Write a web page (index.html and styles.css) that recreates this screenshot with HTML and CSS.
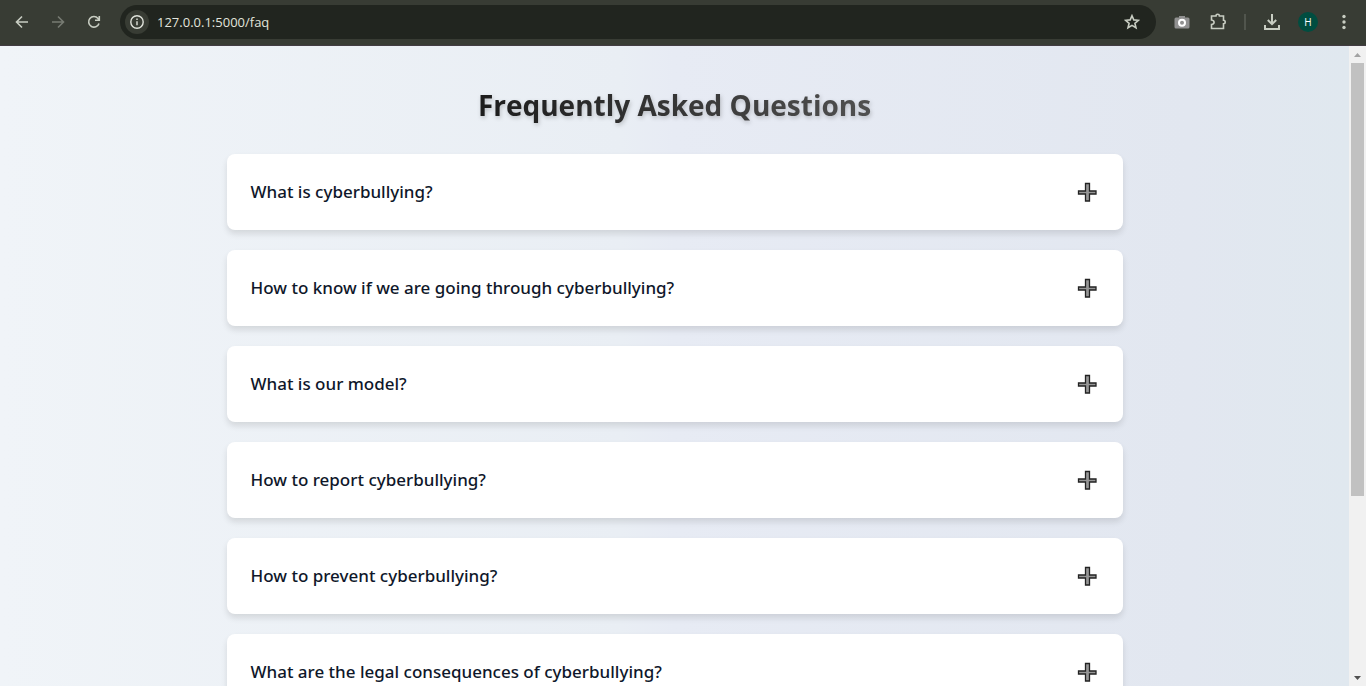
FILE: index.html
```html
<!DOCTYPE html>
<html lang="en">
<head>
<meta charset="utf-8">
<title>Frequently Asked Questions</title>
<link rel="stylesheet" href="styles.css">
</head>
<body>
<header class="toolbar">
  <nav class="nav" aria-label="History">
    <button class="icon-btn" aria-label="Back"><svg viewBox="0 0 16 16"><path d="M14 8H3M8 2.500 2.500 8 8 13.500"/></svg></button>
    <button class="icon-btn dim" aria-label="Forward"><svg viewBox="0 0 16 16"><path d="M2 8h11M8 2.500 13.500 8 8 13.500"/></svg></button>
    <button class="icon-btn" aria-label="Reload"><svg viewBox="0 0 16 16"><path d="M13 9.500A5.300 5.300 0 1 1 12 4.400L13.200 5.800M13.300 2v4.300H9"/></svg></button>
  </nav>
  <div class="omnibox">
    <button class="info" aria-label="Site information"><svg viewBox="0 0 16 16"><circle cx="8" cy="8" r="6.200"/><path d="M8 7.200v4M8 4.500v1.600"/></svg></button>
    <input class="url" aria-label="Address" value="127.0.0.1:5000/faq">
    <button class="icon-btn" aria-label="Bookmark"><svg viewBox="0 0 16 16"><path d="m8 1.700 1.800 4.200 4.600.4-3.500 3 1.100 4.500L8 11.400l-4 2.400 1.100-4.500-3.500-3 4.600-.4z"/></svg></button>
  </div>
  <div class="actions">
    <button class="icon-btn" aria-label="Screenshot"><svg viewBox="0 0 16 16"><path class="camera" d="M2 3.500h3V2h6v1.500h3q1.500 0 1.500 1.500v8q0 1.500-1.500 1.500H2Q.5 14.500.5 13V5Q.5 3.500 2 3.500z"/><circle class="lens" cx="8" cy="8.700" r="3"/></svg></button>
    <button class="icon-btn large" aria-label="Extensions"><svg viewBox="0 0 18 18"><path d="M3.500 3h4.500a1.700 1.700 0 0 1 3.400 0H15.500v4.300a1.700 1.700 0 0 1 0 3.400v4.800H3.500v-4q2.600-.4 2.600-2.250T3.500 7z"/></svg></button>
    <span class="divider"></span>
    <button class="icon-btn" aria-label="Downloads"><svg viewBox="0 0 16 16"><path class="bold" d="M8 0v10M3.800 6 8 10.200 12.200 6M1 11v4h14v-4"/></svg></button>
    <button class="avatar" aria-label="Profile">H</button>
    <button class="icon-btn" aria-label="Menu"><svg viewBox="0 0 16 16"><g class="dots"><circle cx="8" cy="2.500" r="1.700"/><circle cx="8" cy="8" r="1.700"/><circle cx="8" cy="13.500" r="1.700"/></g></svg></button>
  </div>
</header>
<div class="viewport">
  <main class="page">
    <h1 class="title"><span class="title-text">Frequently Asked Questions</span></h1>
    <div class="faq">
      <button class="card"><span>What is cyberbullying?</span><svg class="plus" viewBox="0 0 20 20"><path d="M8.500 1.500h4v7.500h6.500v3h-6.500v7h-4v-7H1.500v-3h7z"/></svg></button>
      <button class="card"><span>How to know if we are going through cyberbullying?</span><svg class="plus" viewBox="0 0 20 20"><path d="M8.500 1.500h4v7.500h6.500v3h-6.500v7h-4v-7H1.500v-3h7z"/></svg></button>
      <button class="card"><span>What is our model?</span><svg class="plus" viewBox="0 0 20 20"><path d="M8.500 1.500h4v7.500h6.500v3h-6.500v7h-4v-7H1.500v-3h7z"/></svg></button>
      <button class="card"><span>How to report cyberbullying?</span><svg class="plus" viewBox="0 0 20 20"><path d="M8.500 1.500h4v7.500h6.500v3h-6.500v7h-4v-7H1.500v-3h7z"/></svg></button>
      <button class="card"><span>How to prevent cyberbullying?</span><svg class="plus" viewBox="0 0 20 20"><path d="M8.500 1.500h4v7.500h6.500v3h-6.500v7h-4v-7H1.500v-3h7z"/></svg></button>
      <button class="card"><span>What are the legal consequences of cyberbullying?</span><svg class="plus" viewBox="0 0 20 20"><path d="M8.500 1.500h4v7.500h6.500v3h-6.500v7h-4v-7H1.500v-3h7z"/></svg></button>
    </div>
  </main>
  <div class="scrollbar">
    <svg class="arrow up" viewBox="0 0 17 17"><path d="M5 11h7L8.500 7z"/></svg>
    <div class="thumb"></div>
    <div class="rest"></div>
    <svg class="arrow down" viewBox="0 0 17 17"><path d="M5 7h7L8.500 11z"/></svg>
  </div>
</div>
</body>
</html>
```
FILE: styles.css
```css
* { box-sizing: border-box; }

body {
  margin: 0;
  height: 100vh;
  display: flex;
  flex-direction: column;
  overflow: hidden;
  font-family: "Open Sans", "Noto Sans", sans-serif;
}

button { border: 0; padding: 0; background: none; font: inherit; }

.toolbar {
  flex: none;
  height: 46px;
  padding: 0 14px 2px;
  display: flex;
  align-items: center;
  gap: 18px;
  background: #383c34;
  border-bottom: 1px solid #423c42;
}

.nav { display: flex; align-items: center; gap: 20px; }
.actions { display: flex; align-items: center; gap: 18px; }

.icon-btn { width: 16px; height: 16px; color: #c8cdc2; }
.icon-btn.large { width: 18px; height: 18px; }
.icon-btn.dim { color: #777b72; }
.icon-btn svg, .info svg {
  display: block;
  width: 100%;
  height: 100%;
  fill: none;
  stroke: currentColor;
  stroke-width: 1.6;
}

.omnibox {
  flex: 1;
  height: 34px;
  padding: 0 16px 0 5px;
  display: flex;
  align-items: center;
  gap: 8px;
  border-radius: 17px;
  background: #21251f;
}
.info {
  width: 24px;
  height: 24px;
  padding: 4px;
  border-radius: 50%;
  background: #383c34;
  color: #e0e3db;
}
.info svg { stroke-width: 1.4; }
.url {
  flex: 1;
  min-width: 0;
  border: 0;
  padding: 0;
  background: none;
  color: #e1e4dc;
  font: 13px/20px "Open Sans", sans-serif;
}

.icon-btn .camera { fill: #919191; stroke: none; }
.icon-btn .lens { stroke: #fff; stroke-width: 2; }
.icon-btn .bold { stroke-width: 2; }
.icon-btn .dots { fill: currentColor; stroke: none; }
.divider { width: 2px; height: 16px; background: #51554d; }
.avatar {
  width: 20px;
  height: 20px;
  border-radius: 50%;
  background: #004d40;
  color: #fff;
  font-size: 10px;
  line-height: 20px;
}

.viewport { flex: 1; min-height: 0; display: flex; }

.page {
  flex: 1;
  min-width: 0;
  overflow: hidden;
  padding: 40px 32px;
  background: linear-gradient(to right, #f0f4f8, #e9eef4 46%, #e7ebf4 50%, #e2e7f0 88%, #e0e8ef);
}

.title {
  margin: 0 0 30px;
  text-align: center;
  font-size: 28px;
  line-height: 38px;
  font-weight: 700;
}
.title-text {
  background: linear-gradient(to right, #1c1c1c, #505050);
  -webkit-background-clip: text;
  background-clip: text;
  color: transparent;
  filter: drop-shadow(1px 2px 2px rgba(0, 0, 0, 0.2));
}

.faq {
  max-width: 896px;
  margin: 0 auto;
  display: flex;
  flex-direction: column;
  gap: 20px;
}
.card {
  padding: 24px;
  display: flex;
  justify-content: space-between;
  align-items: center;
  border-radius: 8px;
  background: #fff;
  box-shadow: 0 4px 6px rgba(0, 0, 0, 0.11);
  color: #0f172a;
  font-family: "Noto Sans", "Open Sans", sans-serif;
  font-size: 17px;
  line-height: 28px;
  font-weight: 500;
  text-align: left;
}
.plus {
  flex: none;
  width: 20px;
  height: 20px;
  margin-right: 2px;
  fill: #969696;
  stroke: #222;
  stroke-width: 1.3;
}

.scrollbar {
  flex: none;
  width: 17px;
  display: flex;
  flex-direction: column;
  background: #f1f1f1;
}
.arrow { width: 17px; height: 17px; }
.up { fill: #a3a3a3; }
.down { fill: #505050; }
.thumb { flex: 5; margin: 0 2px; background: #c1c1c1; }
.rest { flex: 2; }
```
